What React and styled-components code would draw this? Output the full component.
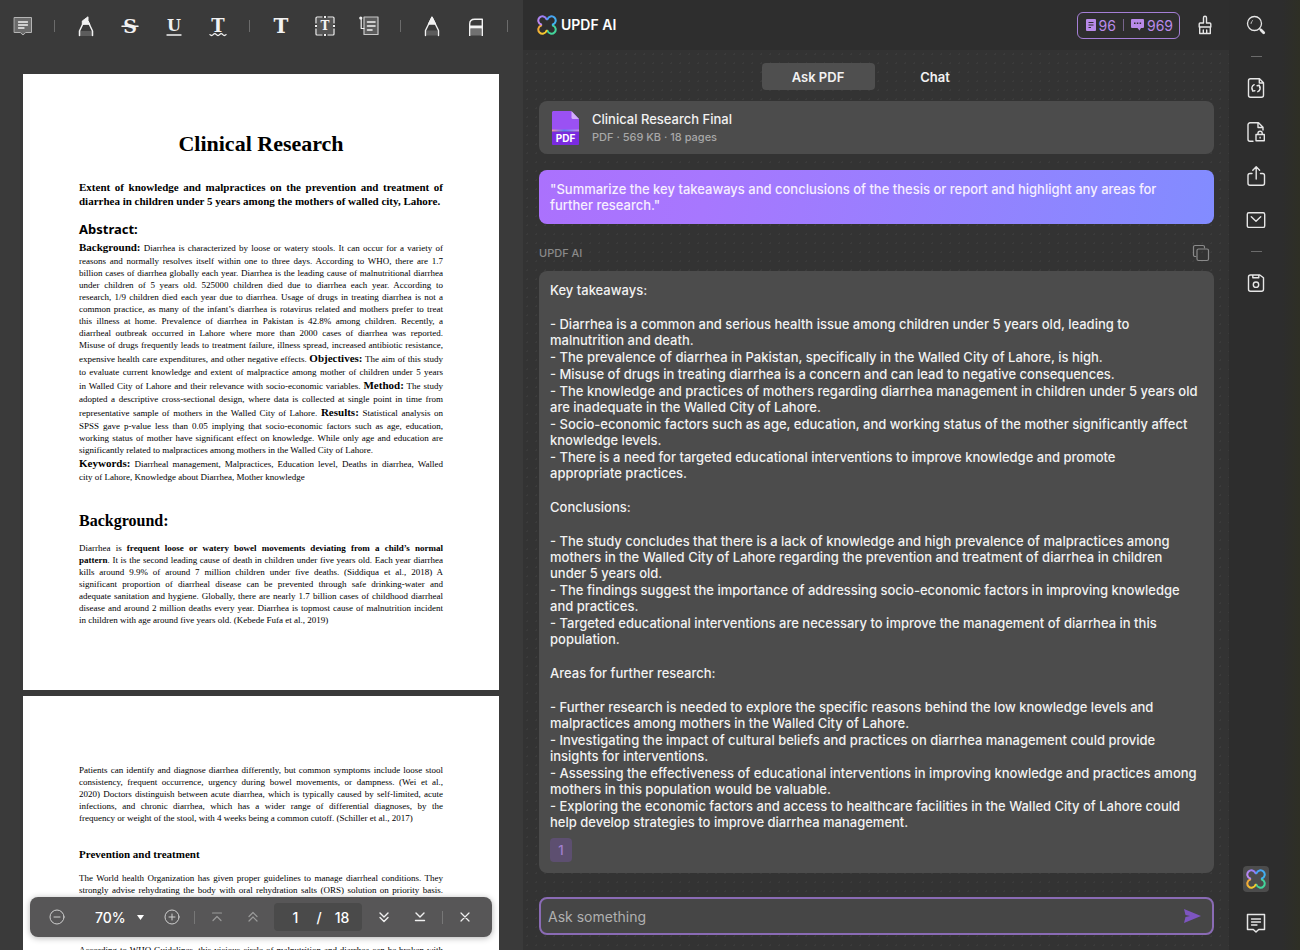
import React, { useState } from "react";
import styled, { createGlobalStyle } from "styled-components";

const abstractLines = [
  { lead: "Background:", text: "Diarrhea is characterized by loose or watery stools. It can occur for a variety of" },
  { text: "reasons and normally resolves itself within one to three days. According to WHO, there are 1.7" },
  { text: "billion cases of diarrhea globally each year. Diarrhea is the leading cause of malnutritional diarrhea" },
  { text: "under children of 5 years old. 525000 children died due to diarrhea each year. According to" },
  { text: "research, 1/9 children died each year due to diarrhea. Usage of drugs in treating diarrhea is not a" },
  { text: "common practice, as many of the infant’s diarrhea is rotavirus related and mothers prefer to treat" },
  { text: "this illness at home. Prevalence of diarrhea in Pakistan is 42.8% among children. Recently, a" },
  { text: "diarrheal outbreak occurred in Lahore where more than 2000 cases of diarrhea was reported." },
  { text: "Misuse of drugs frequently leads to treatment failure, illness spread, increased antibiotic resistance," },
  { before: "expensive health care expenditures, and other negative effects.", lead: "Objectives:", text: "The aim of this study" },
  { text: "to evaluate current knowledge and extent of malpractice among mother of children under 5 years" },
  { before: "in Walled City of Lahore and their relevance with socio-economic variables.", lead: "Method:", text: "The study" },
  { text: "adopted a descriptive cross-sectional design, where data is collected at single point in time from" },
  { before: "representative sample of mothers in the Walled City of Lahore.", lead: "Results:", text: "Statistical analysis on" },
  { text: "SPSS gave p-value less than 0.05 implying that socio-economic factors such as age, education," },
  { text: "working status of mother have significant effect on knowledge. While only age and education are" },
  { text: "significantly related to malpractices among mothers in the Walled City of Lahore.", end: true },
  { lead: "Keywords:", text: "Diarrheal management, Malpractices, Education level, Deaths in diarrhea, Walled" },
  { text: "city of Lahore, Knowledge about Diarrhea, Mother knowledge", end: true },
];

const symptomLines = [
  "Patients can identify and diagnose diarrhea differently, but common symptoms include loose stool",
  "consistency, frequent occurrence, urgency during bowel movements, or dampness. (Wei et al.,",
  "2020) Doctors distinguish between acute diarrhea, which is typically caused by self-limited, acute",
  "infections, and chronic diarrhea, which has a wider range of differential diagnoses, by the",
  "frequency or weight of the stool, with 4 weeks being a common cutoff. (Schiller et al., 2017)",
];

const answer = [
  {
    title: "Key takeaways:",
    items: [
      ["Diarrhea is a common and serious health issue among children under 5 years old, leading to", "malnutrition and death."],
      ["The prevalence of diarrhea in Pakistan, specifically in the Walled City of Lahore, is high."],
      ["Misuse of drugs in treating diarrhea is a concern and can lead to negative consequences."],
      ["The knowledge and practices of mothers regarding diarrhea management in children under 5 years old", "are inadequate in the Walled City of Lahore."],
      ["Socio-economic factors such as age, education, and working status of the mother significantly affect", "knowledge levels."],
      ["There is a need for targeted educational interventions to improve knowledge and promote", "appropriate practices."],
    ],
  },
  {
    title: "Conclusions:",
    items: [
      ["The study concludes that there is a lack of knowledge and high prevalence of malpractices among", "mothers in the Walled City of Lahore regarding the prevention and treatment of diarrhea in children", "under 5 years old."],
      ["The findings suggest the importance of addressing socio-economic factors in improving knowledge", "and practices."],
      ["Targeted educational interventions are necessary to improve the management of diarrhea in this", "population."],
    ],
  },
  {
    title: "Areas for further research:",
    items: [
      ["Further research is needed to explore the specific reasons behind the low knowledge levels and", "malpractices among mothers in the Walled City of Lahore."],
      ["Investigating the impact of cultural beliefs and practices on diarrhea management could provide", "insights for interventions."],
      ["Assessing the effectiveness of educational interventions in improving knowledge and practices among", "mothers in this population would be valuable."],
      ["Exploring the economic factors and access to healthcare facilities in the Walled City of Lahore could", "help develop strategies to improve diarrhea management."],
    ],
  },
];

function Icon({ size = 24, children, ...rest }) {
  return (
    <svg
      width={size}
      height={size}
      viewBox={`0 0 ${size} ${size}`}
      fill="none"
      stroke="currentColor"
      strokeWidth="1.4"
      strokeLinecap="round"
      strokeLinejoin="round"
      aria-hidden="true"
      {...rest}
    >
      {children}
    </svg>
  );
}

// serif letter used by the text tools
function Glyph({ children, y = 19, size = 18, weight = 700 }) {
  return (
    <text
      x="12"
      y={y}
      textAnchor="middle"
      fill="currentColor"
      stroke="none"
      fontFamily="DejaVu Serif, serif"
      fontWeight={weight}
      fontSize={size}
    >
      {children}
    </text>
  );
}

const NoteIcon = ({ filled }) => (
  <Icon strokeWidth={filled ? 1 : 1.5}>
    <path
      d="M3.5 3.500h17v15h-5.800L12 21l-2.700-2.500H3.500z"
      fill={filled ? "#6a6a6a" : "none"}
      stroke={filled ? "#b5b5b5" : "currentColor"}
    />
    <path d="M7.500 8h9M7.500 11h9M7.500 14h5.500" strokeWidth="1.300" />
  </Icon>
);

const HighlighterIcon = () => (
  <Icon>
    <path d="M6 17h12v5H6z" fill="#5c5c5c" stroke="none" />
    <path d="M5.500 21.500V17l3.300-7M18.500 21.500V17l-3.300-7" strokeWidth="1.500" />
    <path d="M8.300 10V7L14 2.800v3.700l1.700 3.500z" fill="currentColor" strokeWidth="1" />
  </Icon>
);

const StrikeIcon = () => (
  <Icon>
    <Glyph size={19}>S</Glyph>
    <path d="M4 12.200h16" strokeWidth="1.500" />
  </Icon>
);

const UnderlineIcon = () => (
  <Icon>
    <Glyph y={17} size={16}>U</Glyph>
    <path d="M5 21h14" strokeWidth="1.400" />
  </Icon>
);

const SquigglyIcon = () => (
  <Icon>
    <Glyph y={18}>T</Glyph>
    <path d="M4 20.600q1.600 1.800 3.200 0t3.200 0 3.200 0 3.200 0 3.200 0" strokeWidth="1.300" />
  </Icon>
);

const TextIcon = () => (
  <Icon>
    <Glyph size={20}>T</Glyph>
  </Icon>
);

const TextBoxIcon = () => (
  <Icon strokeLinecap="butt" strokeWidth="1.200">
    <path d="M4 4h16v16H4z" fill="#545454" stroke="none" />
    <path d="M9.500 3H4a1 1 0 0 0-1 1v5.500M14.500 3H20a1 1 0 0 1 1 1v5.500M3 14.500V20a1 1 0 0 0 1 1h5.500M21 14.500V20a1 1 0 0 1-1 1h-5.500" />
    <path d="M11 3h2M11 21h2M3 11v2M21 11v2" strokeWidth="2" />
    <Glyph y={16} size={12}>T</Glyph>
  </Icon>
);

const CalloutIcon = () => (
  <Icon strokeWidth="1.200">
    <path d="M7 3h14v17.500H7z" fill="#5c5c5c" stroke="#c8c8c8" />
    <path d="M10.500 8h7.500M10.500 12h7.500M10.500 16h4.500" strokeWidth="1.600" />
    <path d="M4.200 5v9.500H7" />
    <circle cx="3.800" cy="4" r="1" fill="currentColor" />
  </Icon>
);

const PencilIcon = () => (
  <Icon>
    <path d="M6.500 16.500h11V21.500h-11z" fill="#5c5c5c" stroke="none" />
    <path d="M5.500 21.500v-5L12 3.300l6.500 13.200v5" />
    <path d="M12 3.300l3.400 6.700H8.600z" fill="currentColor" />
  </Icon>
);

const EraserIcon = () => (
  <Icon strokeLinecap="butt">
    <path d="M6.500 15h11v6.500h-11z" fill="#707070" stroke="none" />
    <path d="M5.700 22V10c0-3 1.800-4.800 5-4.800h7.600V22" />
    <path d="M5.700 13h12.600" strokeWidth="3" />
  </Icon>
);

const BrushIcon = () => (
  <Icon strokeWidth="1.400">
    <path d="M10.500 10V4.800a1.500 1.500 0 0 1 3 0V10h3.300a1 1 0 0 1 1 1v3H6.200v-3a1 1 0 0 1 1-1zM6.700 14v6.500h10.600V14M10.300 20v-3M13.700 20v-3" />
  </Icon>
);

const SearchIcon = () => (
  <Icon strokeWidth="1.300">
    <circle cx="10.500" cy="10.500" r="7" />
    <path d="M7 10.500a3.500 3.500 0 0 1 1.700-3" strokeWidth="0.800" />
    <path d="M17 17l2.700 2.700" strokeWidth="2.800" />
    <path d="M15.500 15.500l2 2" />
  </Icon>
);

const ConvertIcon = () => (
  <Icon strokeWidth="1.400">
    <path d="M15.500 2.800H6.500a2 2 0 0 0-2 2v14.400a2 2 0 0 0 2 2h11a2 2 0 0 0 2-2V6.800zM15.300 3v4h4" />
    <path d="M10.200 8.700a4 4 0 0 0-1.500 6.200M13.800 15.700a4 4 0 0 0 1.500-6.200M8.300 12.800l.4 2.300 2.200-.4M15.700 11.600l-.4-2.300-2.200.4" strokeWidth="1.400" />
  </Icon>
);

const LockFileIcon = () => (
  <Icon strokeWidth="1.400">
    <path d="M9 21.200H6a2 2 0 0 1-2-2V4.800a2 2 0 0 1 2-2h8.500l4.500 4.500V10M14 3v4.500h4.500" />
    <path d="M12 14.500h8.300v6.300H12zM14 14.500v-1.200a2.100 2.100 0 0 1 4.200 0v1.200M16.100 17.200v.8" />
  </Icon>
);

const ShareIcon = () => (
  <Icon strokeWidth="1.400">
    <path d="M8 9.500H6a2 2 0 0 0-2 2v7.700a2 2 0 0 0 2 2h12.500a2 2 0 0 0 2-2v-7.700a2 2 0 0 0-2-2h-2M12.200 15V3M8.800 6.200L12.200 2.800l3.400 3.400" />
  </Icon>
);

const MailIcon = () => (
  <Icon strokeWidth="1.400">
    <rect x="3.300" y="4.800" width="17.400" height="14.600" rx="1.500" />
    <path d="M7.300 8.800l4.700 4.500 4.700-4.500" />
  </Icon>
);

const SaveIcon = () => (
  <Icon strokeWidth="1.400">
    <path d="M6.500 4h9.300l3.700 2.800v11.400a2 2 0 0 1-2 2h-11a2 2 0 0 1-2-2V6a2 2 0 0 1 2-2zM8.800 4.200v2.600h6V4.200" />
    <circle cx="12" cy="13.700" r="2.700" />
  </Icon>
);

const CopyIcon = () => (
  <Icon size={18} strokeWidth="1.200">
    <path d="M3.800 12.500H3a1.500 1.500 0 0 1-1.500-1.500V3A1.500 1.500 0 0 1 3 1.500h8A1.500 1.500 0 0 1 12.500 3v.8" />
    <rect x="5" y="5" width="11.500" height="11.500" rx="1.500" />
  </Icon>
);

function CloverLogo() {
  return (
    <svg width="20" height="20" viewBox="0 0 20 20" fill="none" strokeWidth="2" strokeLinecap="round" aria-hidden="true">
      <defs>
        <linearGradient id="cloverTop" x1="1" y1="8" x2="10" y2="3" gradientUnits="userSpaceOnUse">
          <stop stopColor="#c08af0" />
          <stop offset="1" stopColor="#8f7cf7" />
        </linearGradient>
        <linearGradient id="cloverRight" x1="10" y1="2" x2="18" y2="9" gradientUnits="userSpaceOnUse">
          <stop stopColor="#4a9df5" />
          <stop offset="1" stopColor="#3fb4ee" />
        </linearGradient>
        <linearGradient id="cloverLeft" x1="1" y1="11" x2="10" y2="17" gradientUnits="userSpaceOnUse">
          <stop stopColor="#f2a33a" />
          <stop offset="1" stopColor="#f6d22c" />
        </linearGradient>
      </defs>
      <path d="M15.800 10.500A4.200 4.200 0 1 1 10.500 15.800" stroke="#43d59b" />
      <path d="M9.500 15.800A4.200 4.200 0 1 1 4.200 10.500" stroke="url(#cloverLeft)" />
      <path d="M4.200 9.500A4.200 4.200 0 1 1 9.500 4.200" stroke="url(#cloverTop)" />
      <path d="M10.500 4.200A4.200 4.200 0 1 1 15.800 9.500" stroke="url(#cloverRight)" />
    </svg>
  );
}

const PdfFileIcon = () => (
  <svg width="28" height="34" viewBox="0 0 28 34" aria-hidden="true">
    <defs>
      <linearGradient id="pdfStripe">
        <stop stopColor="#f08bb0" />
        <stop offset="0.450" stopColor="#5b7cf7" />
        <stop offset="1" stopColor="#c98bf0" />
      </linearGradient>
    </defs>
    <path d="M1 0h18l8 8v12H1a1 1 0 0 1-1-1V1z" fill="#9a51f3" />
    <path d="M19.500 0L27 8h-6a1.500 1.500 0 0 1-1.500-1.500z" fill="#d3aefa" />
    <path d="M0 18.500h27v2.200H0z" fill="url(#pdfStripe)" />
    <path d="M0 20.700h27V33a1 1 0 0 1-1 1H1a1 1 0 0 1-1-1z" fill="#7a2be0" />
    <text x="13.500" y="31" textAnchor="middle" fill="#ffffff" fontFamily="Inter, sans-serif" fontWeight="700" fontSize="10">
      PDF
    </text>
  </svg>
);

function Line({ before, lead, text, end }) {
  return (
    <TextLine $lead={!!lead} $end={end}>
      {before && `${before} `}
      {lead && <Lead>{lead}</Lead>}
      {lead ? ` ${text}` : text}
    </TextLine>
  );
}

function DocumentPane() {
  const [zoom, setZoom] = useState("70%");
  const [page, setPage] = useState("1");

  return (
    <Document>
      <Tools>
        <ToolButton aria-label="Comment"><NoteIcon filled /></ToolButton>
        <ToolDivider />
        <ToolButton aria-label="Highlight"><HighlighterIcon /></ToolButton>
        <ToolButton aria-label="Strikethrough"><StrikeIcon /></ToolButton>
        <ToolButton aria-label="Underline"><UnderlineIcon /></ToolButton>
        <ToolButton aria-label="Squiggly line"><SquigglyIcon /></ToolButton>
        <ToolDivider />
        <ToolButton aria-label="Text"><TextIcon /></ToolButton>
        <ToolButton aria-label="Text box"><TextBoxIcon /></ToolButton>
        <ToolButton aria-label="Callout"><CalloutIcon /></ToolButton>
        <ToolDivider />
        <ToolButton aria-label="Pencil"><PencilIcon /></ToolButton>
        <ToolButton aria-label="Eraser"><EraserIcon /></ToolButton>
        <ToolDivider />
      </Tools>

      <Pages>
        <Sheet>
          <PaperTitle>Clinical Research</PaperTitle>
          <Subtitle>
            <SubtitleLine>Extent of knowledge and malpractices on the prevention and treatment of</SubtitleLine>
            <SubtitleLine $end>diarrhea in children under 5 years among the mothers of walled city, Lahore.</SubtitleLine>
          </Subtitle>
          <AbstractHeading>Abstract:</AbstractHeading>
          <Paragraph>
            {abstractLines.map((line) => (
              <Line key={line.text} {...line} />
            ))}
          </Paragraph>
          <SectionHeading>Background:</SectionHeading>
          <Paragraph>
            <TextLine>
              Diarrhea is <b>frequent loose or watery bowel movements deviating from a child’s normal</b>
            </TextLine>
            <TextLine>
              <b>pattern</b>. It is the second leading cause of death in children under five years old. Each year diarrhea
            </TextLine>
            <Line text="kills around 9.9% of around 7 million children under five deaths. (Siddiqua et al., 2018) A" />
            <Line text="significant proportion of diarrheal disease can be prevented through safe drinking-water and" />
            <Line text="adequate sanitation and hygiene. Globally, there are nearly 1.7 billion cases of childhood diarrheal" />
            <Line text="disease and around 2 million deaths every year. Diarrhea is topmost cause of malnutrition incident" />
            <Line end text="in children with age around five years old. (Kebede Fufa et al., 2019)" />
          </Paragraph>
        </Sheet>
        <Sheet>
          <Paragraph $first>
            {symptomLines.map((text, i) => (
              <Line key={text} text={text} end={i === symptomLines.length - 1} />
            ))}
          </Paragraph>
          <MinorHeading>Prevention and treatment</MinorHeading>
          <Paragraph>
            <Line text="The World health Organization has given proper guidelines to manage diarrheal conditions. They" />
            <Line text="strongly advise rehydrating the body with oral rehydration salts (ORS) solution on priority basis." />
          </Paragraph>
          <LowerParagraph>
            <Line text="According to WHO Guidelines, this vicious circle of malnutrition and diarrhea can be broken with" />
          </LowerParagraph>
        </Sheet>
      </Pages>

      <PageBar>
        <BarButton aria-label="Zoom out">
          <Icon size={18} strokeWidth="1"><circle cx="9" cy="9" r="7" /><path d="M6 9h6" /></Icon>
        </BarButton>
        <ZoomField>
          <ZoomSelect aria-label="Zoom level" value={zoom} onChange={(e) => setZoom(e.target.value)}>
            <option>50%</option>
            <option>70%</option>
            <option>100%</option>
          </ZoomSelect>
          <svg width="7" height="5" viewBox="0 0 7 5" fill="#ffffff" aria-hidden="true"><path d="M0 0h7L3.500 5z" /></svg>
        </ZoomField>
        <BarButton aria-label="Zoom in">
          <Icon size={18} strokeWidth="1"><circle cx="9" cy="9" r="7" /><path d="M6 9h6M9 6v6" /></Icon>
        </BarButton>
        <BarDivider />
        <BarPair>
          <BarButton $dim aria-label="First page">
            <Icon size={18} strokeWidth="1.200"><path d="M4.500 5h9M5 12.500l4-4 4 4" /></Icon>
          </BarButton>
          <BarButton $dim aria-label="Previous page">
            <Icon size={18} strokeWidth="1.200"><path d="M5 8.500l4-4 4 4M5 13l4-4 4 4" /></Icon>
          </BarButton>
        </BarPair>
        <PageField>
          <PageInput aria-label="Page number" value={page} onChange={(e) => setPage(e.target.value)} />
          <span>/</span>
          <span>18</span>
        </PageField>
        <BarPair>
          <BarButton $bright aria-label="Next page">
            <Icon size={18} strokeWidth="1.400"><path d="M5 5l4 4 4-4M5 9.500l4 4 4-4" /></Icon>
          </BarButton>
          <BarButton $bright aria-label="Last page">
            <Icon size={18} strokeWidth="1.400"><path d="M5 5l4 4 4-4M4.500 12.500h9" /></Icon>
          </BarButton>
        </BarPair>
        <BarDivider />
        <BarButton $bright aria-label="Close">
          <Icon size={18} strokeWidth="1.200"><path d="M5 5l8 8M13 5l-8 8" /></Icon>
        </BarButton>
      </PageBar>
    </Document>
  );
}

function AiPane() {
  const [question, setQuestion] = useState("");

  return (
    <Assistant>
      <AiHeader>
        <CloverLogo />
        <Brand>UPDF AI</Brand>
        <Credits>
          <svg width="10" height="12" viewBox="0 0 10 12" fill="none" aria-hidden="true">
            <rect width="10" height="12" rx="1" fill="#b98ae9" />
            <path d="M2.500 3.500h5M2.500 6h5M2.500 8.500h2.500" stroke="#2e2e2e" />
          </svg>
          <span>96</span>
          <CreditDivider />
          <svg width="13" height="12" viewBox="0 0 13 12" aria-hidden="true">
            <path d="M1 0h11a1 1 0 0 1 1 1v7a1 1 0 0 1-1 1H10L8.500 11.500 6.500 9H1a1 1 0 0 1-1-1V1a1 1 0 0 1 1-1z" fill="#b98ae9" />
            <path d="M3 3.500h1.500v1.500H3zM5.800 3.500h1.500v1.500H5.800zM8.600 3.500h1.500v1.500H8.600z" fill="#2e2e2e" />
          </svg>
          <span>969</span>
        </Credits>
        <PlainButton aria-label="Clear conversation"><BrushIcon /></PlainButton>
      </AiHeader>

      <AiBody>
        <Tabs>
          <Tab $active>Ask PDF</Tab>
          <Tab>Chat</Tab>
        </Tabs>
        <FileCard>
          <PdfFileIcon />
          <div>
            <FileName>Clinical Research Final</FileName>
            <FileMeta>PDF · 569 KB · 18 pages</FileMeta>
          </div>
        </FileCard>
        <Prompt>
          "Summarize the key takeaways and conclusions of the thesis or report and highlight any areas for
          <br />
          further research."
        </Prompt>
        <ReplyHeader>
          <span>UPDF AI</span>
          <CopyButton aria-label="Copy reply"><CopyIcon /></CopyButton>
        </ReplyHeader>
        <Reply>
          {answer.map((section) => (
            <ReplySection key={section.title}>
              <p>{section.title}</p>
              <ReplyList>
                {section.items.map((lines) => (
                  <li key={lines[0]}>
                    {lines.map((line, i) => (
                      <ReplyLine key={line}>{i === 0 ? `- ${line}` : line}</ReplyLine>
                    ))}
                  </li>
                ))}
              </ReplyList>
            </ReplySection>
          ))}
          <SourceLink href="#page-1">1</SourceLink>
        </Reply>
        <Composer onSubmit={(e) => e.preventDefault()}>
          <AskInput
            aria-label="Ask something"
            placeholder="Ask something"
            value={question}
            onChange={(e) => setQuestion(e.target.value)}
          />
          <SendButton type="submit" aria-label="Send">
            <svg width="17" height="14" viewBox="0 0 17 14" fill="#7d55c0" aria-hidden="true">
              <path d="M0 0L17 7 0 14 1.500 8 6 7 1.500 6z" />
            </svg>
          </SendButton>
        </Composer>
      </AiBody>
    </Assistant>
  );
}

function SideRail() {
  return (
    <Rail>
      <PlainButton aria-label="Search"><SearchIcon /></PlainButton>
      <RailDivider />
      <RailGroup>
        <PlainButton aria-label="Convert"><ConvertIcon /></PlainButton>
        <PlainButton aria-label="Protect"><LockFileIcon /></PlainButton>
        <PlainButton aria-label="Share"><ShareIcon /></PlainButton>
        <PlainButton aria-label="Mail"><MailIcon /></PlainButton>
      </RailGroup>
      <RailDivider />
      <PlainButton aria-label="Save"><SaveIcon /></PlainButton>
      <RailBottom>
        <AiToggle aria-label="UPDF AI"><CloverLogo /></AiToggle>
        <PlainButton aria-label="Comments"><NoteIcon /></PlainButton>
      </RailBottom>
    </Rail>
  );
}

export default function App() {
  return (
    <>
      <GlobalStyle />
      <Shell>
        <DocumentPane />
        <AiPane />
        <SideRail />
      </Shell>
    </>
  );
}

const GlobalStyle = createGlobalStyle`
  * {
    box-sizing: border-box;
  }
  body {
    margin: 0;
    background: #2e2e2e;
    font-family: Inter, "Liberation Sans", sans-serif;
  }
  h1, h2, h3, p, ul {
    margin: 0;
    padding: 0;
  }
  button, input, select {
    font-family: inherit;
    color: inherit;
  }
  svg {
    display: block;
    flex: none;
  }
`;

const Shell = styled.div`
  display: grid;
  grid-template-columns: minmax(0, 523fr) minmax(0, 706fr) 71px;
  height: 100vh;
  overflow: hidden;
`;

const Document = styled.main`
  position: relative;
  display: flex;
  flex-direction: column;
  min-height: 0;
  overflow: hidden;
  background: #3a3a3a;
`;

const Tools = styled.div`
  display: flex;
  align-items: center;
  flex: none;
  height: 52px;
  padding-left: 1px;
`;

const PlainButton = styled.button`
  display: flex;
  align-items: center;
  justify-content: center;
  flex: none;
  width: 24px;
  height: 24px;
  padding: 0;
  border: 0;
  background: none;
  color: #e6e6e6;
  cursor: pointer;
`;

const ToolButton = styled(PlainButton)`
  margin: 0 10px;
  color: #f2f2f2;
`;

const ToolDivider = styled.span`
  width: 1px;
  height: 12px;
  margin: 0 9px;
  background: #6b6b6b;
`;

const Pages = styled.div`
  display: flex;
  flex-direction: column;
  gap: 6px;
  flex: 1;
  min-height: 0;
  padding: 22px 24px 0 23px;
  overflow-y: auto;
  scrollbar-width: none;
`;

const Sheet = styled.article`
  flex: none;
  min-height: 616px;
  padding: 0 56px;
  background: #ffffff;
  color: #000000;
  font-family: "Liberation Serif", serif;
`;

const PaperTitle = styled.h1`
  padding-top: 58px;
  font-size: 22px;
  line-height: 24px;
  text-align: center;
`;

const Subtitle = styled.h2`
  margin-top: 24px;
  font-size: 11px;
  line-height: 14px;
`;

const SubtitleLine = styled.span`
  display: block;
  white-space: nowrap;
  text-align-last: ${(p) => (p.$end ? "left" : "justify")};
`;

const AbstractHeading = styled.h2`
  margin-top: 12px;
  font-family: "Noto Sans", sans-serif;
  font-size: 13px;
  line-height: 18px;
`;

const SectionHeading = styled.h2`
  margin: 29px 0 10px;
  font-size: 16px;
  line-height: 18px;
`;

const MinorHeading = styled.h3`
  margin: 23px 0 9px;
  font-size: 11px;
  line-height: 14px;
`;

const Paragraph = styled.div`
  padding-top: ${(p) => (p.$first ? "68px" : "2px")};
  font-size: 9px;
  line-height: 12px;
`;

const LowerParagraph = styled(Paragraph)`
  margin-top: 46px;
`;

const TextLine = styled.span`
  display: block;
  height: ${(p) => (p.$lead ? "15px" : "12px")};
  line-height: ${(p) => (p.$lead ? "15px" : "12px")};
  white-space: nowrap;
  text-align-last: ${(p) => (p.$end ? "left" : "justify")};
`;

const Lead = styled.b`
  font-size: 11px;
`;

const PageBar = styled.div`
  position: absolute;
  left: 30px;
  right: 31px;
  bottom: 13px;
  display: flex;
  align-items: center;
  justify-content: space-between;
  height: 40px;
  padding: 0 18px;
  border-radius: 8px;
  background: #575657;
  box-shadow: 0 1px 6px rgba(0, 0, 0, 0.3);
  color: #ffffff;
  font-size: 14px;
  font-weight: 500;
`;

const BarButton = styled(PlainButton)`
  width: 18px;
  height: 18px;
  color: ${(p) => (p.$bright ? "#f0f0f0" : p.$dim ? "#9a9a9a" : "#cfcfcf")};
`;

const BarPair = styled.div`
  display: flex;
  gap: 18px;
`;

const ZoomField = styled.label`
  display: flex;
  align-items: center;
  gap: 11px;
  padding: 0 6px 0 16px;
`;

const ZoomSelect = styled.select`
  appearance: none;
  width: 31px;
  padding: 0;
  border: 0;
  background: none;
  font-size: 14px;
  font-weight: 500;
`;

const BarDivider = styled.span`
  width: 1px;
  height: 13px;
  background: #777777;
`;

const PageField = styled.label`
  display: flex;
  align-items: center;
  justify-content: space-between;
  width: 88px;
  height: 28px;
  padding: 0 13px;
  border-radius: 4px;
  background: #4a4a4a;
`;

const PageInput = styled.input`
  width: 16px;
  padding: 0;
  border: 0;
  background: none;
  font-size: 14px;
  font-weight: 500;
  text-align: center;
`;

const Assistant = styled.section`
  display: flex;
  flex-direction: column;
  min-height: 0;
  background: #333333;
`;

const AiHeader = styled.header`
  display: flex;
  align-items: center;
  flex: none;
  height: 50px;
  padding: 0 12px 0 14px;
  background: #2e2e2e;
  color: #ffffff;
`;

const Brand = styled.h1`
  flex: 1;
  margin-left: 4px;
  font-size: 14px;
  line-height: 20px;
  font-weight: 600;
`;

const Credits = styled.button`
  display: flex;
  align-items: center;
  gap: 3px;
  height: 27px;
  margin-right: 13px;
  padding: 0 6px 0 8px;
  border: 1px solid #a57fd6;
  border-radius: 6px;
  background: none;
  color: #b98ae9;
  font-size: 14px;
`;

const CreditDivider = styled.span`
  width: 1px;
  height: 12px;
  margin: 0 4px;
  background: #77658c;
`;

const AiBody = styled.div`
  display: flex;
  flex-direction: column;
  flex: 1;
  min-height: 0;
  padding: 13px 15px 15px 16px;
  background-image: radial-gradient(rgba(255, 255, 255, 0.04) 1px, transparent 1px);
  background-size: 9px 9px;
  color: #f2f2f2;
  font-size: 13px;
  font-weight: 500;
  line-height: 16px;
`;

const Tabs = styled.nav`
  display: flex;
  justify-content: center;
  gap: 4px;
`;

const Tab = styled.button`
  width: 113px;
  height: 27px;
  padding: 0;
  border: 0;
  border-radius: 4px;
  background: ${(p) => (p.$active ? "#4f4f4f" : "none")};
  color: #f2f2f2;
  font-size: 13px;
  font-weight: 600;
`;

const FileCard = styled.div`
  display: flex;
  align-items: center;
  gap: 12px;
  flex: none;
  height: 53px;
  margin-top: 11px;
  padding: 0 13px;
  border-radius: 8px;
  background: #4c4c4c;
`;

const FileName = styled.p`
  line-height: 18px;
`;

const FileMeta = styled.p`
  color: #a8a8a8;
  font-size: 11px;
  line-height: 18px;
`;

const Prompt = styled.p`
  flex: none;
  margin-top: 16px;
  padding: 11px;
  border-radius: 8px;
  background: linear-gradient(100deg, #ab71fd, #a777fe 25%, #828cff);
  color: #f7efff;
  white-space: nowrap;
`;

const ReplyHeader = styled.div`
  display: flex;
  align-items: center;
  justify-content: space-between;
  flex: none;
  margin-top: 20px;
  padding-right: 4px;
  color: #8a8a8a;
  font-size: 11px;
`;

const CopyButton = styled(PlainButton)`
  width: 18px;
  height: 18px;
  color: #8a8a8a;
`;

const Reply = styled.article`
  display: flex;
  flex-direction: column;
  gap: 18px;
  flex: none;
  margin-top: 9px;
  padding: 11px;
  border-radius: 8px;
  background: #4c4c4c;
`;

const ReplySection = styled.section`
  display: flex;
  flex-direction: column;
  gap: 18px;
`;

const ReplyList = styled.ul`
  display: flex;
  flex-direction: column;
  gap: 1px;
  list-style: none;
`;

const ReplyLine = styled.span`
  display: block;
  white-space: nowrap;
`;

const SourceLink = styled.a`
  display: flex;
  align-items: center;
  justify-content: center;
  width: 22px;
  height: 24px;
  margin-top: -10px;
  border-radius: 4px;
  background: #5d4f70;
  color: #a17fd0;
  text-decoration: none;
`;

const Composer = styled.form`
  display: flex;
  align-items: center;
  flex: none;
  height: 38px;
  margin-top: auto;
  padding: 0 11px 0 7px;
  border: 2px solid #8a6bb5;
  border-radius: 8px;
  background: #464646;
`;

const AskInput = styled.input`
  flex: 1;
  min-width: 0;
  padding: 0;
  border: 0;
  outline: 0;
  background: none;
  font-size: 14px;

  &::placeholder {
    color: #b0b0b0;
    opacity: 1;
  }
`;

const SendButton = styled(PlainButton)`
  width: 17px;
`;

const Rail = styled.aside`
  display: flex;
  flex-direction: column;
  align-items: center;
  min-height: 0;
  padding: 13px 17px 15px 0;
  background: linear-gradient(90deg, #2d2d2d 75%, #2e2f25);
`;

const RailDivider = styled.span`
  flex: none;
  width: 11px;
  height: 1px;
  margin: 19px 0;
  background: #6b6b6b;
`;

const RailGroup = styled.div`
  display: flex;
  flex-direction: column;
  gap: 20px;
`;

const RailBottom = styled.div`
  display: flex;
  flex-direction: column;
  align-items: center;
  gap: 19px;
  margin-top: auto;
`;

const AiToggle = styled(PlainButton)`
  width: 26px;
  height: 26px;
  border-radius: 4px;
  background: #4c4c4c;
`;
